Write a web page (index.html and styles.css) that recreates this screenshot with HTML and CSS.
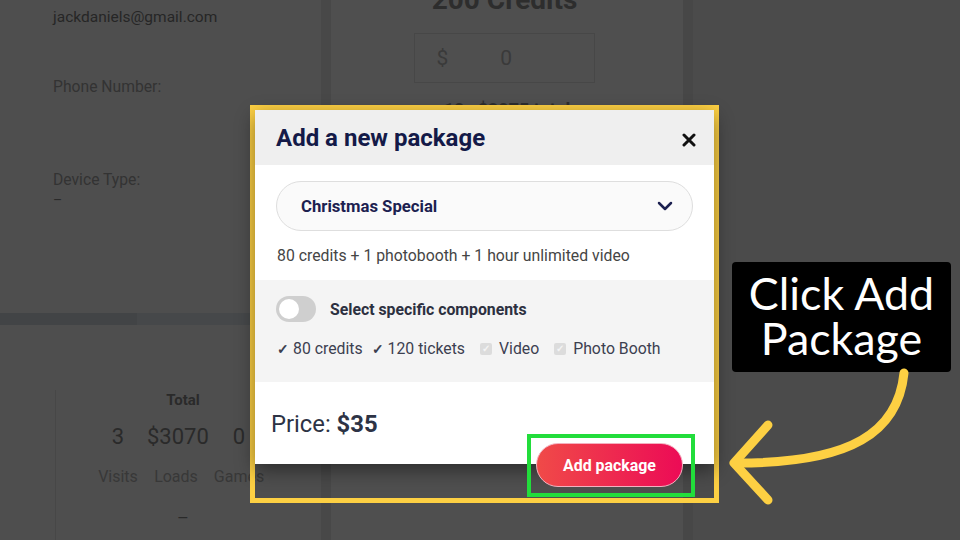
FILE: index.html
```html
<!DOCTYPE html>
<html lang="en">
<head>
  <meta charset="UTF-8">
  <meta name="viewport" content="width=device-width, initial-scale=1.0">
  <title>Add package</title>
  <link rel="stylesheet" href="styles.css">
</head>
<body>
  <div class="page">
    <div class="left">
      <div class="info">
        <div class="email">jackdaniels@gmail.com</div>
        <div class="label phone">Phone Number:</div>
        <div class="label device">Device Type:</div>
        <div class="dash">–</div>
      </div>
      <div class="progress"><div class="progress-fill"></div></div>
      <div class="stats">
        <div class="stats-title">Total</div>
        <div class="stats-values">
          <span>3</span><span>$3070</span><span>0</span>
        </div>
        <div class="stats-labels">
          <span>Visits</span><span>Loads</span><span>Games</span>
        </div>
        <div class="stats-dash">–</div>
      </div>
    </div>
    <div class="gap"></div>
    <div class="middle">
      <div class="credits">200 Credits</div>
      <div class="amount"><span>$</span><span>0</span></div>
      <div class="total-line">10 &nbsp; $3075 total</div>
    </div>
    <div class="strip"></div>
    <div class="rest"></div>
  </div>

  <div class="frame">
    <div class="modal">
      <div class="modal-header">
        <h2>Add a new package</h2>
        <svg class="close" width="14" height="14" viewBox="0 0 14 14">
          <path d="M2 2L12 12M12 2L2 12" stroke="#111" stroke-width="3" stroke-linecap="round"/>
        </svg>
      </div>
      <div class="modal-body">
        <div class="select">
          <span>Christmas Special</span>
          <svg width="16" height="10" viewBox="0 0 16 10">
            <path d="M2 2L8 8L14 2" fill="none" stroke="#1c2150" stroke-width="2.5" stroke-linecap="round" stroke-linejoin="round"/>
          </svg>
        </div>
        <p class="desc">80 credits + 1 photobooth + 1 hour unlimited video</p>
      </div>
      <div class="components">
        <div class="toggle-row">
          <div class="toggle"><div class="knob"></div></div>
          <span>Select specific components</span>
        </div>
        <div class="items">
          <span class="item"><span class="tick">✓</span>80 credits</span>
          <span class="item"><span class="tick">✓</span>120 tickets</span>
          <span class="item"><span class="box">✓</span>Video</span>
          <span class="item"><span class="box">✓</span>Photo Booth</span>
        </div>
      </div>
      <div class="modal-footer">
        <div class="price">Price: <b>$35</b></div>
        <button class="add-btn">Add package</button>
      </div>
    </div>
    <div class="highlight"></div>
  </div>

  <div class="callout">
    <div>Click Add</div>
    <div>Package</div>
  </div>

  <svg class="arrow" width="960" height="540" viewBox="0 0 960 540">
    <path d="M904 373 C 898 432 852 463 738 463" fill="none" stroke="#fdd043" stroke-width="9" stroke-linecap="round"/>
    <path d="M768 425 L734 463 L768 500" fill="none" stroke="#fdd043" stroke-width="9" stroke-linecap="round" stroke-linejoin="round"/>
  </svg>
</body>
</html>
```

FILE: styles.css
```css
body {
  margin: 0;
  width: 960px;
  height: 540px;
  overflow: hidden;
  position: relative;
  background: #4b4b4b;
  font-family: Roboto, "Liberation Sans", sans-serif;
}

.page {
  display: flex;
  height: 540px;
}

.left {
  width: 321px;
  background: #4e4e4e;
  display: flex;
  flex-direction: column;
}

.info {
  height: 313px;
  padding-left: 53px;
  box-sizing: border-box;
}

.email {
  margin-top: 7px;
  font-size: 15.5px;
  line-height: 20px;
  color: #262626;
}

.label {
  font-size: 15.7px;
  line-height: 20px;
  color: #333;
}

.phone {
  margin-top: 50px;
}

.device {
  margin-top: 73px;
}

.dash {
  font-size: 14px;
  line-height: 20px;
  color: #2a2a2a;
}

.progress {
  height: 12px;
  background: #46484a;
}

.progress-fill {
  width: 137px;
  height: 100%;
  background: #424446;
}

.stats {
  flex: 1;
  margin-left: 55px;
  margin-top: 65px;
  border-left: 1px solid #474747;
  width: 254px;
  color: #2a2a2a;
}

.stats-title {
  text-align: center;
  font-size: 15px;
  font-weight: 700;
  line-height: 20px;
}

.stats-values,
.stats-labels {
  display: grid;
  grid-template-columns: 58px 58px 68px;
  margin-left: 33px;
  text-align: center;
}

.stats-values {
  margin-top: 14px;
  font-size: 22px;
  line-height: 26px;
}

.stats-labels {
  margin-top: 17px;
  font-size: 16px;
  line-height: 20px;
  color: #383838;
}

.stats-dash {
  margin-top: 21px;
  text-align: center;
  font-size: 18px;
  line-height: 20px;
}

.gap {
  width: 10px;
  background: #484848;
}

.middle {
  width: 352px;
  background: #4f4f4f;
  display: flex;
  flex-direction: column;
  align-items: center;
}

.credits {
  margin-top: -17px;
  margin-right: 5px;
  font-size: 28px;
  font-weight: 700;
  line-height: 34px;
  color: #2d2d2d;
}

.amount {
  margin-top: 16px;
  margin-right: 6px;
  width: 181px;
  height: 50px;
  box-sizing: border-box;
  border: 1px solid #474747;
  display: flex;
  align-items: center;
  gap: 52px;
  padding-left: 22px;
  font-size: 21px;
  color: #3a3a3a;
}

.total-line {
  margin-top: 16px;
  font-size: 18px;
  font-weight: 700;
  color: #2d2d2d;
}

.strip {
  width: 10px;
  background: #474747;
}

.rest {
  flex: 1;
  background: #4b4b4b;
}

/* modal with yellow frame */
.frame {
  position: absolute;
  left: 250px;
  top: 105px;
  width: 459px;
  height: 388px;
  border: 5px solid #fdd043;
}

.modal {
  height: 354px;
  background: #fff;
  box-shadow: 0 6px 18px rgba(0, 0, 0, 0.45);
  display: flex;
  flex-direction: column;
}

.modal-header {
  height: 55px;
  flex-shrink: 0;
  background: #efefef;
  display: flex;
  align-items: center;
  justify-content: space-between;
  padding: 0 18px 0 21px;
}

.modal-header h2 {
  margin: 0;
  font-size: 24px;
  font-weight: 700;
  color: #141a48;
}

.close {
  margin-top: 4px;
}

.modal-body {
  height: 115px;
  padding: 16px 21px 0;
  box-sizing: border-box;
}

.select {
  height: 50px;
  box-sizing: border-box;
  border: 1px solid #dedede;
  border-radius: 25px;
  background: #fafafa;
  display: flex;
  align-items: center;
  justify-content: space-between;
  padding: 0 19px 0 24px;
  font-size: 16.7px;
  font-weight: 700;
  color: #1c2150;
}

.desc {
  margin: 15px 0 0 1px;
  font-size: 15.8px;
  line-height: 20px;
  color: #454545;
}

.components {
  height: 102px;
  background: #f4f4f4;
  padding: 16px 21px 0;
  box-sizing: border-box;
}

.toggle-row {
  display: flex;
  align-items: center;
  gap: 14px;
  font-size: 15.8px;
  font-weight: 700;
  color: #2c3040;
}

.toggle {
  width: 40px;
  height: 26px;
  border-radius: 13px;
  background: #cfcfcf;
  position: relative;
}

.knob {
  position: absolute;
  left: 3px;
  top: 3px;
  width: 20px;
  height: 20px;
  border-radius: 50%;
  background: #fff;
}

.items {
  margin-top: 17px;
  display: flex;
  gap: 9px;
  font-size: 15.8px;
  line-height: 20px;
  color: #3c4050;
  padding-left: 1px;
}

.item {
  display: flex;
  align-items: center;
}

.item + .item + .item {
  margin-left: 6px;
}

.tick {
  font-size: 14px;
  font-weight: 700;
  margin-right: 4px;
}

.box {
  width: 12px;
  height: 12px;
  border-radius: 2px;
  background: #dcdcdc;
  color: #f4f4f4;
  font-size: 10px;
  line-height: 12px;
  text-align: center;
  font-weight: 700;
  margin-right: 7px;
}

.modal-footer {
  flex: 1;
  position: relative;
  padding: 28px 16px 0;
}

.price {
  font-size: 23.8px;
  line-height: 28px;
  color: #2d3345;
}

.add-btn {
  position: absolute;
  right: 31px;
  top: 61px;
  width: 147px;
  height: 44px;
  border-radius: 22px;
  border: 1.5px solid #f4b0bf;
  background: linear-gradient(90deg, #f04a48, #ec0b56);
  color: #fff;
  font-family: Roboto, "Liberation Sans", sans-serif;
  font-size: 15.9px;
  font-weight: 700;
  cursor: pointer;
}

.highlight {
  position: absolute;
  left: 272px;
  top: 324px;
  width: 168px;
  height: 63px;
  box-sizing: border-box;
  border: 4px solid #22dd3b;
}

/* annotation */
.callout {
  position: absolute;
  left: 732px;
  top: 262px;
  width: 219px;
  height: 110px;
  box-sizing: border-box;
  padding-top: 9px;
  background: #000;
  border-radius: 4px;
  color: #fff;
  font-family: Lato, "Open Sans", sans-serif;
  font-size: 44.8px;
  line-height: 45px;
  text-align: center;
}

.arrow {
  position: absolute;
  left: 0;
  top: 0;
  pointer-events: none;
}
```
